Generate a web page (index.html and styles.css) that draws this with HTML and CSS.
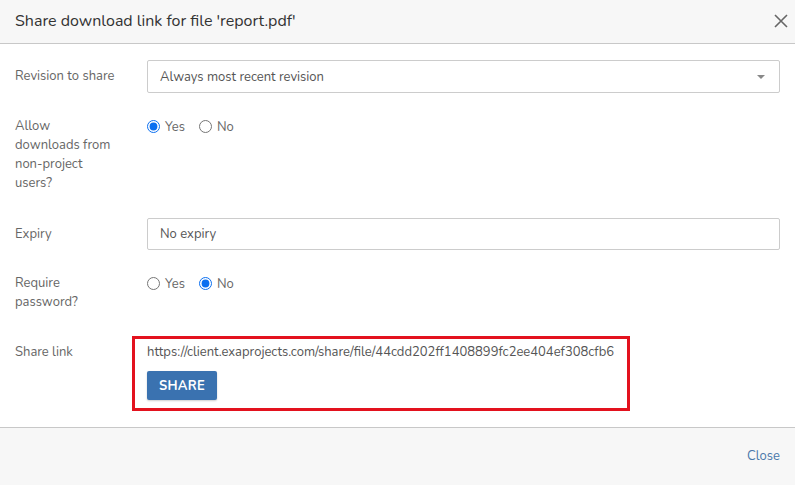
FILE: index.html
```html
<!DOCTYPE html>
<html>
<head>
<meta charset="utf-8">
<link rel="stylesheet" href="styles.css">
</head>
<body>
<div class="modal">
  <div class="modal-header">
    <div class="modal-title">Share download link for file 'report.pdf'</div>
    <svg class="close-x" width="14" height="14" viewBox="0 0 14 14"><path d="M1 1L13 13M13 1L1 13" stroke="#666" stroke-width="1.6" fill="none"/></svg>
  </div>
  <div class="modal-body">
    <div class="row row-center r1">
      <div class="label">Revision to share</div>
      <div class="select">
        <span>Always most recent revision</span>
        <span class="caret"></span>
      </div>
    </div>
    <div class="row r2">
      <div class="label">Allow<br>downloads from<br>non-project<br>users?</div>
      <div class="radios">
        <label class="radio"><input type="radio" name="a" checked><span>Yes</span></label>
        <label class="radio"><input type="radio" name="a"><span>No</span></label>
      </div>
    </div>
    <div class="row row-center r3">
      <div class="label">Expiry</div>
      <div class="input">No expiry</div>
    </div>
    <div class="row r4">
      <div class="label">Require<br>password?</div>
      <div class="radios">
        <label class="radio"><input type="radio" name="b"><span>Yes</span></label>
        <label class="radio"><input type="radio" name="b" checked><span>No</span></label>
      </div>
    </div>
    <div class="row r5">
      <div class="label">Share link</div>
      <div class="share">
        <div class="url">https://client.exaprojects.com/share/file/44cdd202ff1408899fc2ee404ef308cfb6</div>
        <button class="btn">SHARE</button>
        <div class="highlight"></div>
      </div>
    </div>
  </div>
  <div class="modal-footer">
    <a class="close-link">Close</a>
  </div>
</div>
</body>
</html>
```
FILE: styles.css
```css
* { box-sizing: border-box; }
html, body { margin: 0; padding: 0; background: #fff; }
body { font-family: "Nunito", "Lato", "Noto Sans", sans-serif; width: 795px; height: 485px; overflow: hidden; }
.modal { width: 795px; height: 485px; display: flex; flex-direction: column; }
.modal-header {
  height: 44px; background: #f7f7f7; border-bottom: 1px solid #c8c8c8;
  display: flex; align-items: center; justify-content: space-between;
  padding: 0 7px 2px 15px;
}
.modal-title { font-size: 16px; color: #333; }
.close-x { display: block; }
.modal-body { padding: 16px 15px 27px 15px; flex: none; }
.row { display: grid; grid-template-columns: 132px 1fr; align-items: start; }
.row-center { align-items: center; }
.label { font-size: 13px; line-height: 19px; color: #666; }
.r1 { margin-bottom: 24px; }
.r2 { margin-bottom: 25px; }
.r3 { margin-bottom: 24px; }
.r4 { margin-bottom: 31px; }
.select, .input {
  height: 33px; border: 1px solid #ccc; border-radius: 2px;
  padding: 0 12px; display: flex; align-items: center; justify-content: space-between;
  font-size: 13px; color: #555;
}
.input { height: 32px; }
.caret { width: 0; height: 0; border-left: 4px solid transparent; border-right: 4px solid transparent; border-top: 4px solid #888; margin-right: 2px; }
.radios { display: flex; gap: 14px; height: 19px; align-items: center; }
.radio { display: flex; align-items: center; gap: 5px; font-size: 13px; color: #666; }
.radio input { margin: 0; width: 13px; height: 13px; accent-color: #0b6ff0; }
.share { position: relative; }
.url { font-size: 13px; line-height: 19px; color: #555; }
.btn {
  margin-top: 9px; width: 70px; height: 29px; border: none; border-radius: 2px;
  background: #3a72b0; color: #fff; font-family: inherit; font-size: 13px; font-weight: bold;
  letter-spacing: 0.3px; box-shadow: 0 1px 2px rgba(0,0,0,0.2); padding: 0;
}
.highlight {
  position: absolute; left: -15px; top: -7px; width: 498px; height: 75px;
  border: 3px solid #e3121e;
}
.modal-footer {
  flex: 1; background: #f7f7f7; border-top: 1px solid #c8c8c8;
  display: flex; align-items: center; justify-content: flex-end; padding: 0 15px 1px 0;
}
.close-link { font-size: 13px; color: #4a78aa; }
```
